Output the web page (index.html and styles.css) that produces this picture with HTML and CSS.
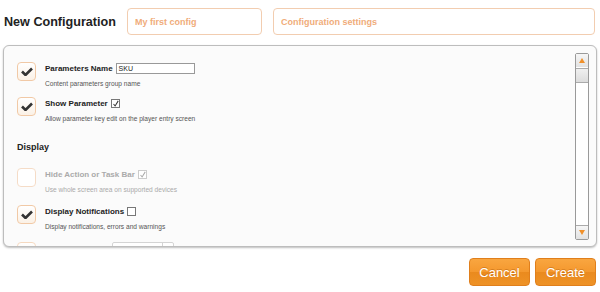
FILE: index.html
```html
<!DOCTYPE html>
<html lang="en">
<head>
    <meta charset="UTF-8">
    <title>New Configuration</title>
    <link rel="stylesheet" href="styles.css">
</head>
<body>
    <div class="header">
        <h1>New Configuration</h1>
        <input class="head-input name-input" type="text" placeholder="My first config">
        <input class="head-input desc-input" type="text" placeholder="Configuration settings">
    </div>

    <div class="panel">
        <div class="panel-body">
            <div class="row">
                <div class="big-check checked">
                    <svg viewBox="0 0 12 9" width="12" height="9"><path d="M1 4.5 L4.5 8 L11 1.5" fill="none" stroke="#333" stroke-width="2.6"/></svg>
                </div>
                <div class="row-text">
                    <div class="label">Parameters Name <span class="text-field">SKU</span></div>
                    <div class="desc">Content parameters group name</div>
                </div>
            </div>

            <div class="row">
                <div class="big-check checked">
                    <svg viewBox="0 0 12 9" width="12" height="9"><path d="M1 4.5 L4.5 8 L11 1.5" fill="none" stroke="#333" stroke-width="2.6"/></svg>
                </div>
                <div class="row-text">
                    <div class="label">Show Parameter <span class="mini-check">
                        <svg viewBox="0 0 9 9" width="9" height="9"><path d="M2 4.5 L4 7 L8 0.5" fill="none" stroke="#333" stroke-width="1.3"/></svg>
                    </span></div>
                    <div class="desc">Allow parameter key edit on the player entry screen</div>
                </div>
            </div>

            <h2>Display</h2>

            <div class="row spaced disabled">
                <div class="big-check"></div>
                <div class="row-text">
                    <div class="label">Hide Action or Task Bar <span class="mini-check">
                        <svg viewBox="0 0 9 9" width="9" height="9"><path d="M2 4.5 L4 7 L8 0.5" fill="none" stroke="#aaa" stroke-width="1.3"/></svg>
                    </span></div>
                    <div class="desc">Use whole screen area on supported devices</div>
                </div>
            </div>

            <div class="row spaced">
                <div class="big-check checked">
                    <svg viewBox="0 0 12 9" width="12" height="9"><path d="M1 4.5 L4.5 8 L11 1.5" fill="none" stroke="#333" stroke-width="2.6"/></svg>
                </div>
                <div class="row-text">
                    <div class="label">Display Notifications <span class="mini-check"></span></div>
                    <div class="desc">Display notifications, errors and warnings</div>
                </div>
            </div>

            <div class="row faded">
                <div class="big-check"></div>
                <div class="select-field"><span></span></div>
            </div>
        </div>

        <div class="scrollbar">
            <div class="scroll-btn"><span class="arrow-up"></span></div>
            <div class="scroll-thumb"></div>
            <div class="scroll-track"></div>
            <div class="scroll-btn"><span class="arrow-down"></span></div>
        </div>
    </div>

    <div class="actions">
        <button class="button">Cancel</button>
        <button class="button">Create</button>
    </div>
</body>
</html>
```

FILE: styles.css
```css
* {
    margin: 0;
    padding: 0;
    box-sizing: border-box;
    font-family: 'Liberation Sans', Arial, sans-serif;
}

body {
    background: #ffffff;
    color: #222;
    padding: 8px 3px 0 3px;
}

.header {
    display: flex;
    align-items: center;
    height: 27px;
}

.header h1 {
    font-size: 12.6px;
    font-weight: bold;
    color: #222;
    margin-left: 1px;
    width: 123px;
}

.head-input {
    height: 27px;
    border: 1px solid #f2cdb0;
    border-radius: 4px;
    background: #fff;
    padding-left: 7px;
    font-size: 9px;
    font-weight: bold;
    color: #e99a5e;
    outline: none;
}

.head-input::placeholder {
    color: #f0ac7a;
}

.name-input {
    width: 135px;
}

.desc-input {
    width: 322px;
    margin-left: 11px;
}

.panel {
    display: flex;
    margin-top: 10px;
    height: 202px;
    width: 594px;
    border: 1px solid #bdbdbd;
    border-radius: 6px;
    background: #fbfbfb;
    box-shadow: 0 1px 2px rgba(0, 0, 0, 0.25);
    overflow: hidden;
}

.panel-body {
    flex: 1;
    overflow: hidden;
    padding: 16px 0 0 13px;
}

.row {
    display: flex;
    gap: 9px;
    margin-bottom: 9px;
}

.row.spaced {
    margin-bottom: 11px;
}

.big-check {
    width: 19px;
    height: 19px;
    flex-shrink: 0;
    border: 1px solid #f1c9a6;
    border-radius: 4px;
    background: linear-gradient(#ffffff, #fbf1e6);
    display: flex;
    align-items: center;
    justify-content: center;
}

.row-text {
    padding-top: 1px;
}

.label {
    font-size: 8px;
    font-weight: bold;
    line-height: 10px;
    height: 11px;
    display: flex;
    align-items: center;
    gap: 3px;
    color: #222;
}

.desc {
    font-size: 6.6px;
    line-height: 9px;
    margin-top: 5px;
    color: #555;
}

.text-field {
    display: inline-block;
    width: 79px;
    height: 11px;
    border: 1px solid #999;
    background: #fff;
    font-size: 7px;
    font-weight: normal;
    line-height: 9px;
    padding-left: 2px;
    color: #222;
}

.mini-check {
    display: inline-flex;
    width: 9px;
    height: 9px;
    border: 1px solid #777;
    background: #fff;
    align-items: center;
    justify-content: center;
}

.mini-check svg {
    width: 8px;
    height: 8px;
}

.select-field {
    width: 62px;
    height: 16px;
    margin-left: 67px;
    border: 1px solid #d4d4d4;
    border-radius: 2px;
    background: #fff;
    display: flex;
    justify-content: flex-end;
}

.select-field span {
    width: 11px;
    border-left: 1px solid #d4d4d4;
}

h2 {
    font-size: 9px;
    font-weight: bold;
    line-height: 12px;
    color: #222;
    margin: 18px 0 15px 0;
}

.disabled .big-check {
    border-color: #f5dcc7;
    background: #fff;
}

.disabled .label,
.disabled .desc {
    color: #aaa;
}

.disabled .mini-check {
    border-color: #ccc;
}

.faded .big-check {
    border-color: #f5d9c0;
}

.scrollbar {
    width: 14px;
    margin: 7px 7px 6px 0;
    border: 1px solid #9a9a9a;
    border-radius: 2px;
    background: #fff;
    display: flex;
    flex-direction: column;
}

.scroll-btn {
    height: 13px;
    background: linear-gradient(#f6f6f6, #e2e2e2);
    display: flex;
    align-items: center;
    justify-content: center;
}

.scroll-thumb {
    height: 15px;
    margin-top: 1px;
    border-top: 1px solid #aaa;
    border-bottom: 1px solid #aaa;
    background: linear-gradient(#f0f0f0, #dcdcdc);
}

.scroll-track {
    flex: 1;
    border-bottom: 1px solid #aaa;
}

.arrow-up {
    width: 0;
    height: 0;
    border-left: 3.5px solid transparent;
    border-right: 3.5px solid transparent;
    border-bottom: 5px solid #f0902a;
}

.arrow-down {
    width: 0;
    height: 0;
    border-left: 3.5px solid transparent;
    border-right: 3.5px solid transparent;
    border-top: 5px solid #f0902a;
}

.actions {
    display: flex;
    justify-content: flex-end;
    gap: 5px;
    margin-top: 11px;
    padding-right: 1px;
}

.button {
    width: 61px;
    height: 28px;
    border: 1px solid #e07f1c;
    border-radius: 4px;
    background: linear-gradient(#f9a640 0%, #f4982e 50%, #ea8a1e 51%, #ee9226 100%);
    color: #fff;
    font-size: 13px;
    text-shadow: 0 -1px 0 rgba(150, 70, 0, 0.35);
    cursor: pointer;
}
```
